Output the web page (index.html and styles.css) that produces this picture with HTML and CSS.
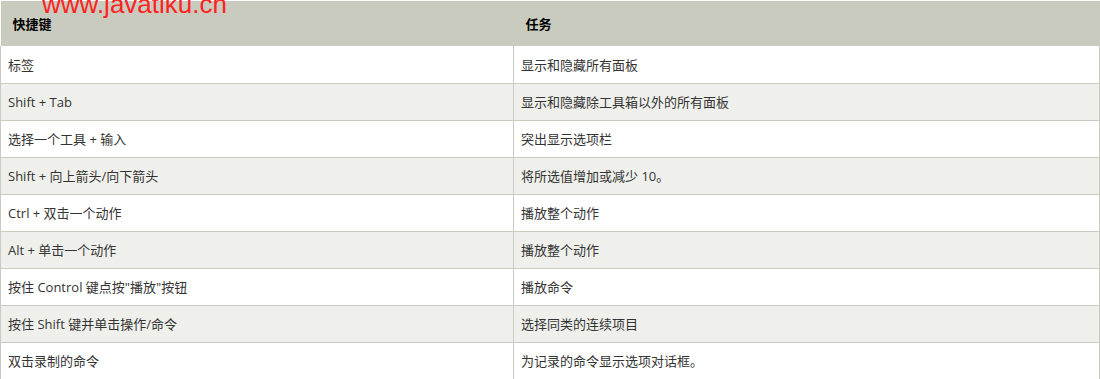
FILE: index.html
```html
<!DOCTYPE html>
<html lang="zh-CN">
<head>
<meta charset="utf-8">
<link rel="stylesheet" href="styles.css">
</head>
<body>
<div class="wrap">
  <div class="watermark">www.javatiku.cn</div>
  <table class="keys">
    <thead>
      <tr><th class="c1">快捷键</th><th>任务</th></tr>
    </thead>
    <tbody>
      <tr><td class="c1">标签</td><td>显示和隐藏所有面板</td></tr>
      <tr class="alt"><td class="c1">Shift + Tab</td><td>显示和隐藏除工具箱以外的所有面板</td></tr>
      <tr><td class="c1">选择一个工具 + 输入</td><td>突出显示选项栏</td></tr>
      <tr class="alt"><td class="c1">Shift + 向上箭头/向下箭头</td><td>将所选值增加或减少 10。</td></tr>
      <tr><td class="c1">Ctrl + 双击一个动作</td><td>播放整个动作</td></tr>
      <tr class="alt"><td class="c1">Alt + 单击一个动作</td><td>播放整个动作</td></tr>
      <tr><td class="c1">按住 Control 键点按"播放"按钮</td><td>播放命令</td></tr>
      <tr class="alt"><td class="c1">按住 Shift 键并单击操作/命令</td><td>选择同类的连续项目</td></tr>
      <tr><td class="c1">双击录制的命令</td><td>为记录的命令显示选项对话框。</td></tr>
    </tbody>
  </table>
</div>
</body>
</html>
```
FILE: styles.css
```css
html, body {
  margin: 0;
  padding: 0;
  background: #fff;
}
body {
  padding-top: 1px;
  font-family: "Open Sans", "Noto Sans CJK SC", sans-serif;
  font-size: 13px;
  color: #333;
}
.wrap {
  position: relative;
  width: 1100px;
}
.watermark {
  position: absolute;
  left: 42px;
  top: -12px;
  font-family: "Liberation Sans", Arial, sans-serif;
  font-size: 26px;
  color: #f22;
  line-height: 30px;
  z-index: 2;
}
.keys {
  width: 1100px;
  border-collapse: collapse;
  table-layout: fixed;
}
.keys th {
  background: #c8cbbe;
  color: #000;
  font-weight: bold;
  text-align: left;
  height: 45px;
  padding: 0 0 0 12px;
  box-sizing: border-box;
  vertical-align: middle;
}
.keys th.c1 { width: 513px; }
.keys td {
  height: 37px;
  box-sizing: border-box;
  padding: 0 0 0 7px;
  border-bottom: 1px solid #c9cac0;
  border-right: 1px solid #c9cac0;
  vertical-align: middle;
  background: #fff;
}
.keys td.c1 {
  border-left: 1px solid #c9cac0;
  border-right: 1px solid #c9cac0;
}
.keys tr.alt td {
  background: #eff0eb;
}
```
